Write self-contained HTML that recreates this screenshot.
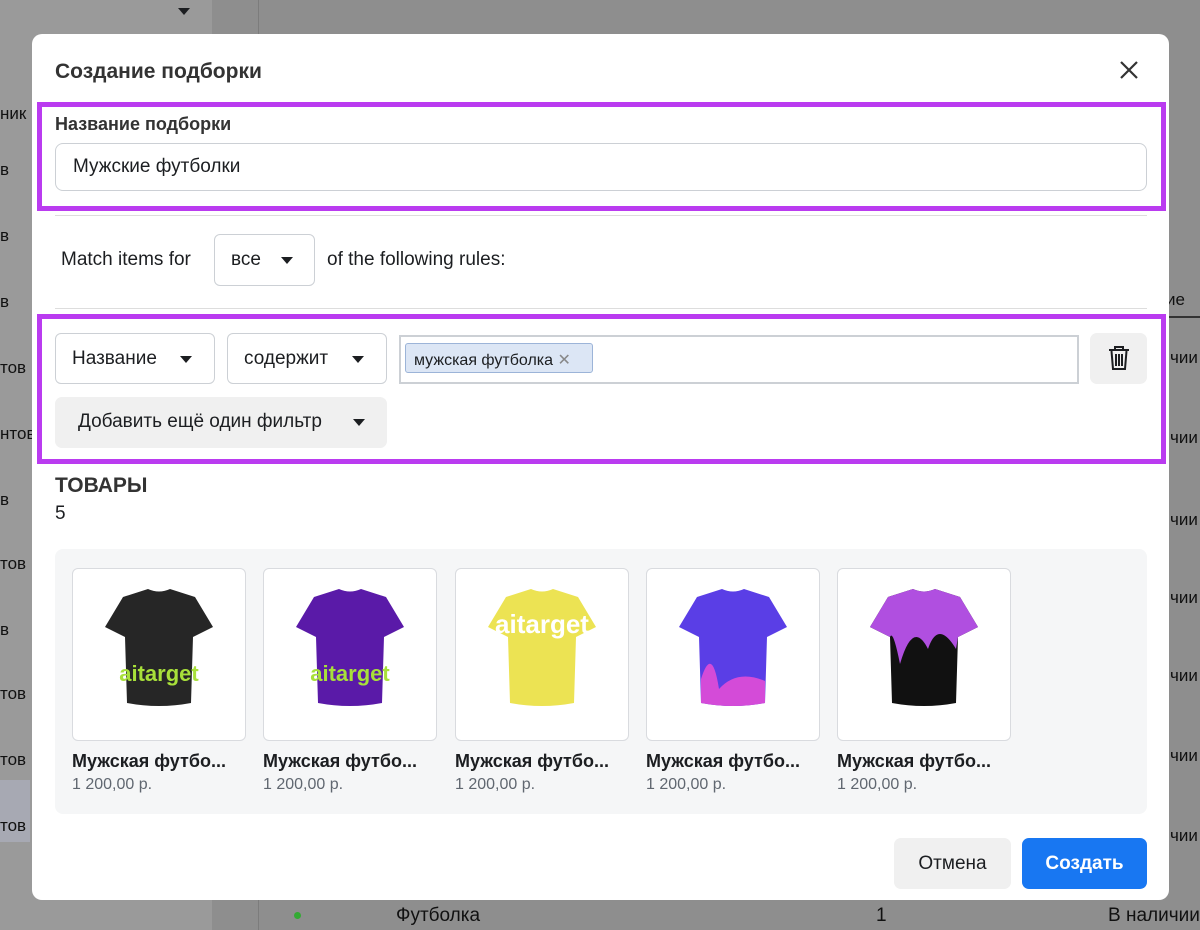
<!DOCTYPE html>
<html><head><meta charset="utf-8"><style>
*{box-sizing:border-box;margin:0;padding:0}
body{width:1200px;height:930px;overflow:hidden;background:#8e8e8e;font-family:"Liberation Sans",Arial,sans-serif;position:relative;color:#1c1e21}
.bg{position:absolute;color:#111;font-size:17px}
.modal{position:absolute;left:32px;top:34px;width:1137px;height:866px;background:#fff;border-radius:10px}
.abs{position:absolute}
.pb{position:absolute;border:5px solid #ba3bf0}
.btn{position:absolute;border:1px solid #ccd0d5;border-radius:6px;background:#fff;font-size:19px;display:flex;align-items:center;padding-left:16px}
.tri{width:0;height:0;border-left:6px solid transparent;border-right:6px solid transparent;border-top:7px solid #1c1e21;position:absolute}
.card{position:absolute;top:568px;width:174px;height:173px;background:#fff;border:1px solid #d9dbdf;border-radius:6px}
.ct{position:absolute;top:751px;font-weight:bold;font-size:18px;color:#1c1e21}
.cp{position:absolute;top:776px;font-size:16px;color:#606770}
</style></head><body>
<div class="abs" style="left:0;top:0;width:212px;height:930px;background:#9a9a9a"></div>
<div class="abs" style="left:0;top:780px;width:30px;height:62px;background:#a7a9b3"></div>
<div class="abs" style="left:258px;top:0;width:1px;height:930px;background:#7c7c7c"></div>
<div class="tri" style="left:178px;top:8px"></div>
<div class="bg" style="left:0;top:104px">ник</div>
<div class="bg" style="left:0;top:160px">в</div>
<div class="bg" style="left:0;top:226px">в</div>
<div class="bg" style="left:0;top:292px">в</div>
<div class="bg" style="left:0;top:358px">тов</div>
<div class="bg" style="left:0;top:424px">нтов</div>
<div class="bg" style="left:0;top:490px">в</div>
<div class="bg" style="left:0;top:554px">тов</div>
<div class="bg" style="left:0;top:620px">в</div>
<div class="bg" style="left:0;top:684px">тов</div>
<div class="bg" style="left:0;top:750px">тов</div>
<div class="bg" style="left:0;top:816px">тов</div>
<div class="bg" style="left:1166px;top:290px">ие</div>
<div class="abs" style="left:1166px;top:316px;width:34px;height:2px;background:#333"></div>
<div class="bg" style="left:1170px;top:348px">чии</div>
<div class="bg" style="left:1170px;top:428px">чии</div>
<div class="bg" style="left:1170px;top:510px">чии</div>
<div class="bg" style="left:1170px;top:588px">чии</div>
<div class="bg" style="left:1170px;top:666px">чии</div>
<div class="bg" style="left:1170px;top:746px">чии</div>
<div class="bg" style="left:1170px;top:826px">чии</div>
<div class="bg" style="left:396px;top:905px;font-size:19px">Футболка</div>
<div class="bg" style="left:876px;top:905px;font-size:19px">1</div>
<div class="bg" style="left:1108px;top:905px;font-size:19px">В наличии</div>
<div class="abs" style="left:294px;top:912px;width:7px;height:7px;border-radius:50%;background:#3a3"></div>

<div class="modal"></div>
<div class="abs" style="left:55px;top:60px;font-size:21px;font-weight:bold;color:#333">Создание подборки</div>
<svg class="abs" style="left:1119px;top:60px" width="20" height="20" viewBox="0 0 20 20"><path d="M2 2L18 18M18 2L2 18" stroke="#333" stroke-width="2.2"/></svg>

<div class="pb" style="left:37px;top:102px;width:1129px;height:109px"></div>
<div class="abs" style="left:55px;top:114px;font-size:18px;font-weight:bold;color:#333">Название подборки</div>
<div class="btn" style="left:55px;top:143px;width:1092px;height:48px;border-radius:8px;border:1px solid #ccd0d5;padding-left:17px">Мужские футболки</div>
<div class="abs" style="left:55px;top:215px;width:1092px;height:1px;background:#ddd"></div>
<div class="abs" style="left:61px;top:249px;font-size:19px">Match items for</div>
<div class="btn" style="left:214px;top:234px;width:101px;height:52px">все<div class="tri" style="left:66px;top:22px"></div></div>
<div class="abs" style="left:327px;top:249px;font-size:19px">of the following rules:</div>
<div class="abs" style="left:55px;top:308px;width:1092px;height:1px;background:#ddd"></div>

<div class="pb" style="left:37px;top:314px;width:1129px;height:150px"></div>
<div class="btn" style="left:55px;top:333px;width:160px;height:51px">Название<div class="tri" style="left:124px;top:22px"></div></div>
<div class="btn" style="left:227px;top:333px;width:160px;height:51px">содержит<div class="tri" style="left:124px;top:22px"></div></div>
<div class="abs" style="left:399px;top:335px;width:680px;height:49px;border:2px solid #ccd0d5"></div>
<div class="abs" style="left:405px;top:343px;width:188px;height:30px;background:#dce6f5;border:1px solid #9cb4d8;border-radius:3px;font-size:16px;padding:6px 8px">мужская футболка <span style="color:#888">✕</span></div>
<div class="abs" style="left:1090px;top:333px;width:57px;height:51px;background:#f0f0f0;border-radius:7px"></div>
<svg class="abs" style="left:1108px;top:345px" width="22" height="26" viewBox="0 0 22 26"><path d="M1 5H21M7 5V2H15V5M3.5 6L5 24H17L18.5 6M8 9V21M11 9V21M14 9V21" stroke="#1c1e21" stroke-width="2" fill="none"/></svg>
<div class="abs" style="left:55px;top:397px;width:332px;height:51px;background:#f0f0f0;border-radius:7px;font-size:19px;padding:14px 0 0 23px">Добавить ещё один фильтр<div class="tri" style="left:298px;top:22px"></div></div>

<div class="abs" style="left:55px;top:474px;font-size:21px;font-weight:bold;color:#333">ТОВАРЫ</div>
<div class="abs" style="left:55px;top:503px;font-size:19px">5</div>
<div class="abs" style="left:55px;top:549px;width:1092px;height:265px;background:#f5f6f7;border-radius:8px"></div>

<div class="card" style="left:72px"><svg width="172" height="171" viewBox="0 0 172 171"><path d="M50 28L75 20Q86 25 97 20L122 28L140 58L120 68L118 134Q86 140 54 134L52 68L32 58Z" fill="#262626"/><text x="86" y="112" text-anchor="middle" font-size="22" font-weight="bold" fill="#a8e03a" font-family="Liberation Sans">aitarget</text></svg></div>
<div class="card" style="left:263px"><svg width="172" height="171" viewBox="0 0 172 171"><path d="M50 28L75 20Q86 25 97 20L122 28L140 58L120 68L118 134Q86 140 54 134L52 68L32 58Z" fill="#5a1aa8"/><text x="86" y="112" text-anchor="middle" font-size="22" font-weight="bold" fill="#a8e03a" font-family="Liberation Sans">aitarget</text></svg></div>
<div class="card" style="left:455px"><svg width="172" height="171" viewBox="0 0 172 171"><path d="M50 28L75 20Q86 25 97 20L122 28L140 58L120 68L118 134Q86 140 54 134L52 68L32 58Z" fill="#ece353"/><text x="86" y="64" text-anchor="middle" font-size="26" font-weight="bold" fill="#fff" font-family="Liberation Sans">aitarget</text></svg></div>
<div class="card" style="left:646px"><svg width="172" height="171" viewBox="0 0 172 171"><path d="M50 28L75 20Q86 25 97 20L122 28L140 58L120 68L118 134Q86 140 54 134L52 68L32 58Z" fill="#5a3ee6"/><path d="M54 134L54 110Q65 75 72 120Q90 100 118 112L118 134Q86 140 54 134Z" fill="#d44bd8"/></svg></div>
<div class="card" style="left:837px"><svg width="172" height="171" viewBox="0 0 172 171"><path d="M50 28L75 20Q86 25 97 20L122 28L140 58L120 68L118 134Q86 140 54 134L52 68L32 58Z" fill="#111"/><path d="M32 58L50 28L75 20Q86 25 97 20L122 28L140 58L120 68L118 80Q100 50 90 80Q75 50 62 95Q55 60 52 68Z" fill="#b04fe0"/></svg></div>

<div class="ct" style="left:72px">Мужская футбо...</div><div class="cp" style="left:72px">1 200,00 р.</div>
<div class="ct" style="left:263px">Мужская футбо...</div><div class="cp" style="left:263px">1 200,00 р.</div>
<div class="ct" style="left:455px">Мужская футбо...</div><div class="cp" style="left:455px">1 200,00 р.</div>
<div class="ct" style="left:646px">Мужская футбо...</div><div class="cp" style="left:646px">1 200,00 р.</div>
<div class="ct" style="left:837px">Мужская футбо...</div><div class="cp" style="left:837px">1 200,00 р.</div>

<div class="abs" style="left:894px;top:838px;width:117px;height:51px;background:#f0f0f0;border-radius:7px;font-size:19px;text-align:center;line-height:51px">Отмена</div>
<div class="abs" style="left:1022px;top:838px;width:125px;height:51px;background:#1877f2;border-radius:7px;font-size:19px;font-weight:bold;color:#fff;text-align:center;line-height:51px">Создать</div>
</body></html>
